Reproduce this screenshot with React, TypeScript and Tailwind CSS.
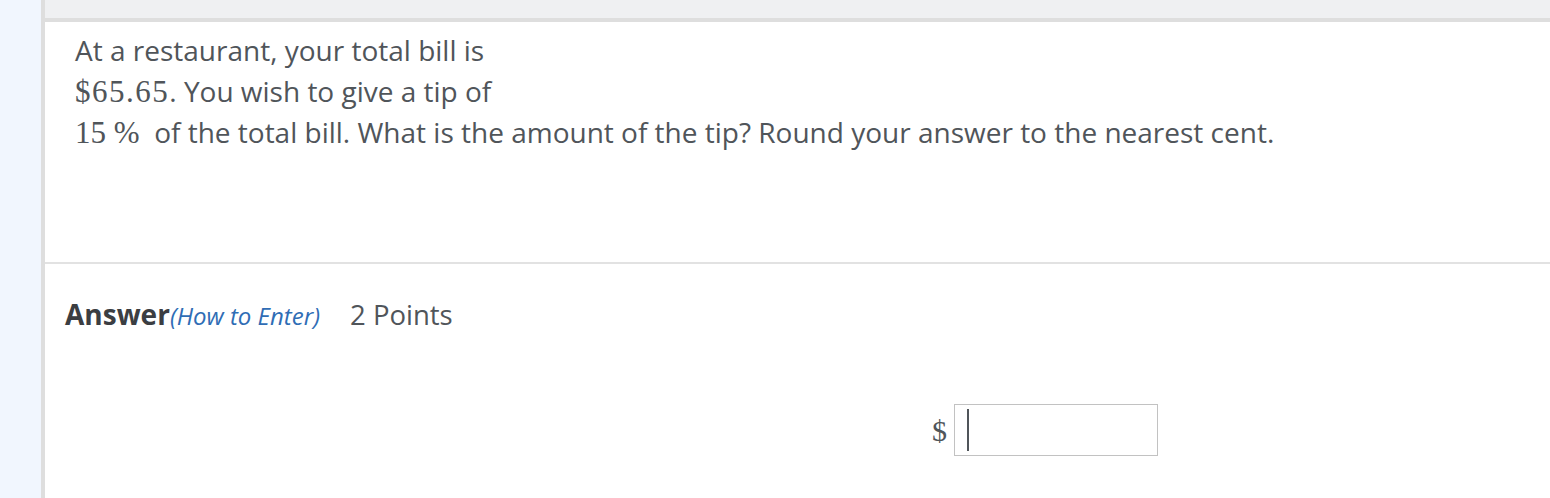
export default function App() {
  return (
    <div className="flex h-[498px] w-full overflow-hidden bg-white font-['Open_Sans',sans-serif]">
      <div className="w-[41px] shrink-0 bg-[#f1f6fe]" />
      <div className="flex flex-1 flex-col border-l-4 border-[#dedede]">
        <div className="h-[22px] shrink-0 border-b-4 border-[#dedede] bg-[#eff0f2]" />

        {/* Question */}
        <section className="h-[240px] shrink-0 px-[30px] pt-[8px] text-[28px] leading-[41px] text-[#50555a]">
          <p>At a restaurant, your total bill is</p>
          <p>
            <span className="font-['Liberation_Serif',serif] text-[31px] tracking-[1.5px] leading-[41px]">$65.65</span>. You wish to give a tip of
          </p>
          <p>
            <span className="font-['Liberation_Serif',serif] text-[31px] leading-[41px]">15&nbsp;%</span>&nbsp;&nbsp;of the total bill. What is the amount of the tip? Round your answer to the nearest cent.
          </p>
        </section>

        <div className="h-[2px] shrink-0 bg-[#e2e2e2]" />

        {/* Answer */}
        <section className="flex-1 px-5 pt-[30px]">
          <div className="flex items-baseline leading-[40px]">
            <span className="text-[28px] font-bold text-[#3b3e42]">Answer</span>
            <a href="#" className="text-[24px] italic text-[#2f6db5]">(How to Enter)</a>
            <span className="ml-[30px] text-[27.5px] text-[#50555a]">2 Points</span>
          </div>
          <div className="mt-[68px] flex items-center pl-[867px]">
            <span className="mr-[7px] font-['Liberation_Serif',serif] text-[30px] text-[#50555a]">$</span>
            <div className="flex h-[52px] w-[204px] items-center border border-[#c2c2c2] px-[12px]">
              <div className="h-[42px] w-[2px] bg-[#50555a]" />
            </div>
          </div>
        </section>
      </div>
    </div>
  )
}
